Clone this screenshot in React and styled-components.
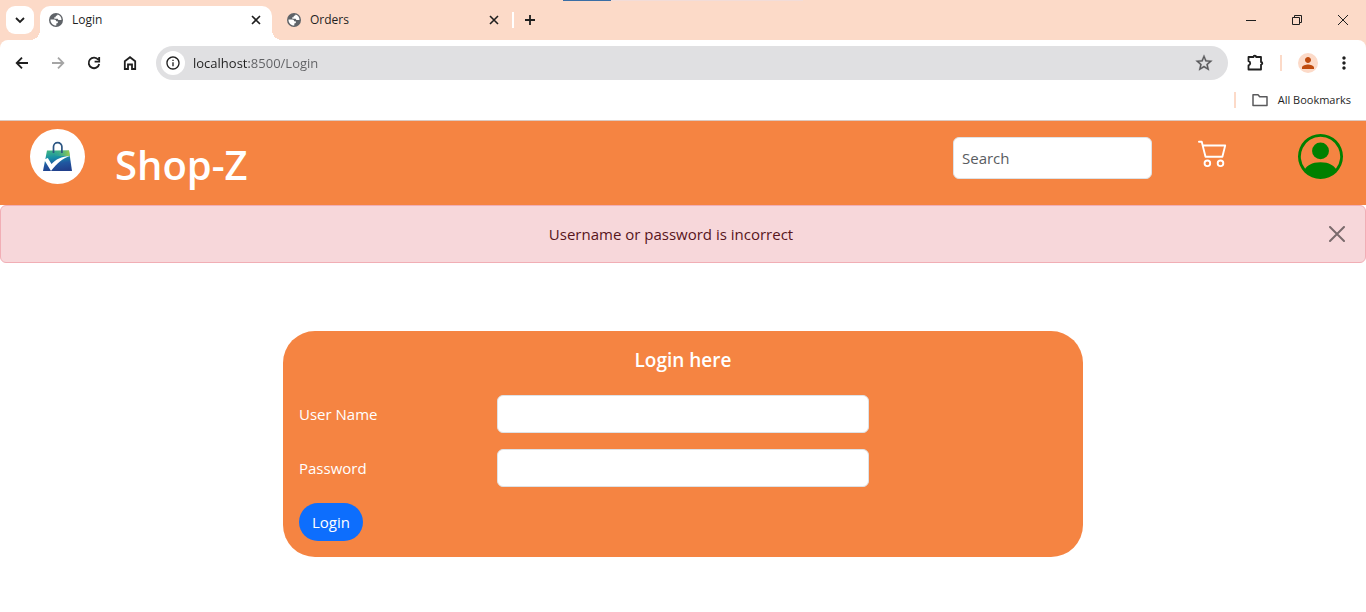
import React, { useState } from "react";
import styled, { createGlobalStyle } from "styled-components";
import { BsCart2, BsPersonCircle } from "react-icons/bs";
import { MdStarOutline, MdOutlineInfo, MdMoreVert, MdPerson } from "react-icons/md";

const peach = "#fcdac8";
const orange = "#f58442";

const GlobalStyle = createGlobalStyle`
  *, *::before, *::after { box-sizing: border-box; }
  body {
    margin: 0;
    background: #fff;
    color: #212529;
    font-family: "Segoe UI", "Open Sans", sans-serif;
    font-size: 15px;
    line-height: 24px;
  }
  button, input { font: inherit; color: inherit; }
  svg { display: block; flex: none; }
`;

const IconButton = styled.button`
  display: flex;
  align-items: center;
  justify-content: center;
  flex: none;
  width: ${(p) => p.$w || 36}px;
  height: ${(p) => p.$h || 34}px;
  padding: 0;
  border: 0;
  border-radius: ${(p) => p.$radius || 0}px;
  background: ${(p) => p.$bg || "transparent"};
  color: ${(p) => p.$color || "#1f1f1f"};
`;

/* Browser frame */
const Frame = styled.header`
  position: relative;
  background: ${peach};
`;
const DragStrip = styled.div`
  position: absolute;
  top: 0;
  left: 50%;
  transform: translateX(-50%);
  width: 240px;
  height: 1px;
  background: linear-gradient(to right, #3a6ea5 48px, #f2dcd8 48px);
`;
const TabStrip = styled.div`
  display: flex;
  height: 40px;
  padding: 6px 0 0 6px;
`;
const Tab = styled.div`
  position: relative;
  display: flex;
  align-items: center;
  width: ${(p) => (p.$active ? 232 : 238)}px;
  height: 34px;
  margin-left: ${(p) => (p.$active ? 6 : 0)}px;
  padding: 0 6px 6px ${(p) => (p.$active ? 8 : 14)}px;
  border-radius: 10px 10px 0 0;
  background: ${(p) => (p.$active ? "#fff" : "transparent")};
  &::before, &::after {
    content: ${(p) => (p.$active ? '""' : "none")};
    position: absolute;
    bottom: 0;
    width: 10px;
    height: 10px;
  }
  &::before {
    right: 100%;
    background: radial-gradient(circle at 0 0, transparent 10px, #fff 10px);
  }
  &::after {
    left: 100%;
    background: radial-gradient(circle at 100% 0, transparent 10px, #fff 10px);
  }
`;
const TabLink = styled.a`
  display: flex;
  flex: 1;
  align-items: center;
  gap: 8px;
  color: #1f1f1f;
  font-size: 12px;
  line-height: 18px;
  text-decoration: none;
`;
const TabDivider = styled.span`
  width: 2px;
  height: 16px;
  margin: 6px 2px 0;
  background: #fff;
`;
const WindowButtons = styled.div`
  display: flex;
  margin-left: auto;
`;
const Toolbar = styled.div`
  display: flex;
  align-items: center;
  height: 46px;
  padding: 0 12px 0 4px;
  border-radius: 8px 8px 0 0;
  background: #fff;
`;
const AddressBar = styled.div`
  display: flex;
  flex: 1;
  align-items: center;
  gap: 8px;
  height: 34px;
  margin: 0 9px 0 8px;
  padding: 0 6px 0 5px;
  border-radius: 17px;
  background: #e0e0e2;
`;
const Address = styled.input`
  flex: 1;
  min-width: 0;
  padding: 0;
  border: 0;
  outline: 0;
  font-size: 13px;
  line-height: 20px;
  color: #5f6063;
  background: linear-gradient(to right, #1f1f1f 56px, #5f6063 56px);
  background-clip: text;
  -webkit-text-fill-color: transparent;
`;
const Rule = styled.span`
  width: 2px;
  height: 16px;
  background: ${peach};
`;
const Profile = styled.div`
  display: flex;
  align-items: center;
  margin-left: 7px;
`;
const Avatar = styled.span`
  display: flex;
  align-items: center;
  justify-content: center;
  width: 20px;
  height: 20px;
  border-radius: 50%;
  background: ${peach};
  color: #bf4a0d;
`;
const Bookmarks = styled.div`
  display: flex;
  align-items: center;
  justify-content: flex-end;
  gap: 16px;
  height: 35px;
  padding: 0 15px 6px 0;
  border-bottom: 1px solid #dcc9c0;
  background: #fff;
`;
const BookmarkLink = styled.a`
  display: flex;
  align-items: center;
  gap: 10px;
  color: #1f1f1f;
  font-size: 11px;
  line-height: 18px;
  text-decoration: none;
`;

/* Shop page */
const Navbar = styled.nav`
  display: flex;
  align-items: flex-start;
  height: 84px;
  padding: 8px 23px 0 30px;
  background: ${orange};
`;
const Brand = styled.a`
  display: flex;
  gap: 30px;
  margin-right: auto;
  color: #fff;
  font-size: 40px;
  font-weight: 600;
  line-height: 72px;
  text-decoration: none;
`;
const Search = styled.input`
  width: 199px;
  height: 42px;
  margin: 8px 46px 0 0;
  padding: 0 8px;
  border: 1px solid #dee2e6;
  border-radius: 6px;
  background: #fff;
  &::placeholder { color: #595c5f; opacity: 1; }
`;
const NavLink = styled.a`
  display: block;
  margin: ${(p) => p.$top}px ${(p) => p.$right}px 0 0;
  color: ${(p) => p.$color};
`;
const Alert = styled.div`
  position: relative;
  padding: 16px 48px 16px 24px;
  border: 1px solid #f1aeb5;
  border-radius: 6px;
  background: #f7d7da;
  color: #58151c;
  text-align: center;
`;
const Dismiss = styled.button`
  position: absolute;
  top: 0;
  right: 0;
  padding: 20px;
  border: 0;
  background: transparent;
  color: #000;
  opacity: 0.5;
`;
const Card = styled.form`
  display: grid;
  gap: 16px;
  max-width: 800px;
  margin: 68px auto 0;
  padding: 16px;
  border-radius: 32px;
  background: ${orange};
  color: #fff;
`;
const CardTitle = styled.h1`
  margin: 0 0 6px;
  font-size: 19px;
  font-weight: 600;
  line-height: 26px;
  text-align: center;
`;
const Field = styled.div`
  display: grid;
  grid-template-columns: repeat(12, 1fr);
  column-gap: 24px;
  align-items: center;
`;
const Label = styled.label`
  grid-column: span 3;
`;
const TextBox = styled.input`
  grid-column: span 6;
  min-width: 0;
  height: 38px;
  padding: 0 12px;
  border: 1px solid #dee2e6;
  border-radius: 6px;
  background: #fff;
  color: #212529;
`;
const Submit = styled.button`
  justify-self: start;
  height: 38px;
  padding: 0 13px;
  border: 0;
  border-radius: 19px;
  background: #0d6efd;
  color: #fff;
`;

const Stroke = ({ d, size = 16, width = 1.8, ...rest }) => (
  <svg width={size} height={size} viewBox={`0 0 ${size} ${size}`} fill="none" stroke="currentColor" strokeWidth={width} aria-hidden="true" {...rest}>
    <path d={d} />
  </svg>
);
const Globe = () => (
  <svg width="16" height="16" viewBox="0 0 16 16" aria-hidden="true">
    <circle cx="8" cy="8" r="7" fill="#5f6368" />
    <path d="M2.500 7.600h3.800c1.300 0 1.800.8 1.800 1.700h1.200c.9.300.9 1.500 0 1.900l-1 .3v2.100C4.900 13.700 2.300 11 2.500 7.600zM9.600 2.600c-.2 1-.8 1.300-1.900 1.400v1.300H6.300v1.500h3.300l.8 1.200h3.100C13.600 5.400 12 3.200 9.600 2.600z" fill="#fff" />
  </svg>
);
const Logo = () => (
  <svg width="55" height="55" viewBox="0 0 55 55" aria-hidden="true">
    <defs>
      <linearGradient id="bag" x1="0.3" y1="0" x2="0.5" y2="1">
        <stop offset="0" stopColor="#3fb583" />
        <stop offset="0.35" stopColor="#168fa6" />
        <stop offset="0.65" stopColor="#2057a0" />
        <stop offset="1" stopColor="#21408c" />
      </linearGradient>
      <linearGradient id="leaf" x1="0" y1="0" x2="1" y2="0">
        <stop offset="0" stopColor="#45bd86" stopOpacity="0" />
        <stop offset="1" stopColor="#9ccc4b" />
      </linearGradient>
    </defs>
    <circle cx="27.500" cy="27.500" r="27.500" fill="#fff" />
    <path d="M17 21.500h22L42 42H13z" fill="url(#bag)" />
    <path d="M24 21.500h15l.8 5.500H24z" fill="url(#leaf)" />
    <path d="M23.500 24v-6.200a4.200 4.200 0 0 1 8.400 0V24" fill="none" stroke="#2b5582" strokeWidth="1.700" />
    <path d="M14 30.500l3.800-1.500 3.700 6c4-4.500 10-7.500 18.500-8-7.500 2.500-13 7-19 15z" fill="#fff" />
  </svg>
);

const cross = "M4 4l8 8M12 4l-8 8";

export default function App() {
  const [showAlert, setShowAlert] = useState(true);
  return (
    <>
      <GlobalStyle />
      <Frame>
        <DragStrip />
        <TabStrip>
          <IconButton $w={28} $h={28} $radius={9} $bg="#fff" aria-label="Search tabs">
            <Stroke d="M4 6l4 4 4-4" />
          </IconButton>
          <Tab $active>
            <TabLink href="#login"><Globe />Login</TabLink>
            <IconButton $w={20} $h={20} aria-label="Close Login"><Stroke d={cross} width={1.6} /></IconButton>
          </Tab>
          <Tab>
            <TabLink href="#orders"><Globe />Orders</TabLink>
            <IconButton $w={20} $h={20} aria-label="Close Orders"><Stroke d={cross} width={1.6} /></IconButton>
          </Tab>
          <TabDivider />
          <IconButton $w={28} $h={28} aria-label="New tab"><Stroke d="M8 3v10M3 8h10" /></IconButton>
          <WindowButtons>
            <IconButton $w={46} $h={28} aria-label="Minimize"><Stroke d="M3 8.500h10" width={1} /></IconButton>
            <IconButton $w={46} $h={28} aria-label="Restore"><Stroke d="M3.500 5.500h7v7h-7zM5.500 5.500v-2h7v7h-2" width={1} /></IconButton>
            <IconButton $w={46} $h={28} aria-label="Close"><Stroke d="M3 3l10 10M13 3L3 13" width={1} /></IconButton>
          </WindowButtons>
        </TabStrip>
        <Toolbar>
          <IconButton aria-label="Back"><Stroke d="M14 8H3M8 2.700L2.700 8 8 13.300" /></IconButton>
          <IconButton $color="#a5a5a5" aria-label="Forward"><Stroke d="M2 8h11M8 2.700L13.300 8 8 13.300" /></IconButton>
          <IconButton aria-label="Reload"><Stroke d="M12.300 4.800A5.300 5.300 0 1 0 13.200 9M13.200 2v4.600H8.600" /></IconButton>
          <IconButton aria-label="Home"><Stroke d="M2.800 6.200L8 2.200l5.200 4V14H10V9.500H6V14H2.800z" /></IconButton>
          <AddressBar>
            <IconButton $w={24} $h={24} $radius={12} $bg="#fff" aria-label="Site information"><MdOutlineInfo size={16} /></IconButton>
            <Address aria-label="Address" defaultValue="localhost:8500/Login" />
            <IconButton $color="#5a5a5c" aria-label="Bookmark this tab"><MdStarOutline size={20} stroke="currentColor" strokeWidth={0.3} /></IconButton>
          </AddressBar>
          <IconButton aria-label="Extensions">
            <Stroke size={20} d="M3.500 4h5a1.300 1.300 0 0 1 2.600 0H16v5a1.300 1.300 0 0 1 0 2.600V16.500H3.500v-4a2.200 2.200 0 0 0 0-4.300z" strokeLinejoin="round" />
          </IconButton>
          <Profile>
            <Rule />
            <IconButton $w={52} aria-label="Profile"><Avatar><MdPerson size={18} /></Avatar></IconButton>
          </Profile>
          <IconButton aria-label="Browser menu" $w={20}><MdMoreVert size={20} /></IconButton>
        </Toolbar>
        <Bookmarks>
          <Rule />
          <BookmarkLink href="#bookmarks">
            <Stroke d="M1 2.800h5l1.700 2H15v8.700H1z" width={1.5} color="#5a5a5c" strokeLinejoin="round" />
            All Bookmarks
          </BookmarkLink>
        </Bookmarks>
      </Frame>
      <Navbar>
        <Brand href="#home"><Logo />Shop-Z</Brand>
        <Search type="search" placeholder="Search" aria-label="Search" />
        <NavLink href="#cart" $top={8} $right={70} $color="#fff" aria-label="Cart"><BsCart2 size={30} /></NavLink>
        <NavLink href="#account" $top={5} $right={0} $color="#008000" aria-label="Account"><BsPersonCircle size={45} /></NavLink>
      </Navbar>
      <main>
        {showAlert && (
          <Alert role="alert">
            Username or password is incorrect
            <Dismiss type="button" aria-label="Dismiss" onClick={() => setShowAlert(false)}>
              <Stroke d="M1 1l14 14M15 1L1 15" width={2} strokeLinecap="round" />
            </Dismiss>
          </Alert>
        )}
        <Card onSubmit={(e) => e.preventDefault()}>
          <CardTitle>Login here</CardTitle>
          <Field>
            <Label htmlFor="username">User Name</Label>
            <TextBox id="username" type="text" />
          </Field>
          <Field>
            <Label htmlFor="password">Password</Label>
            <TextBox id="password" type="password" />
          </Field>
          <Submit type="submit">Login</Submit>
        </Card>
      </main>
    </>
  );
}
